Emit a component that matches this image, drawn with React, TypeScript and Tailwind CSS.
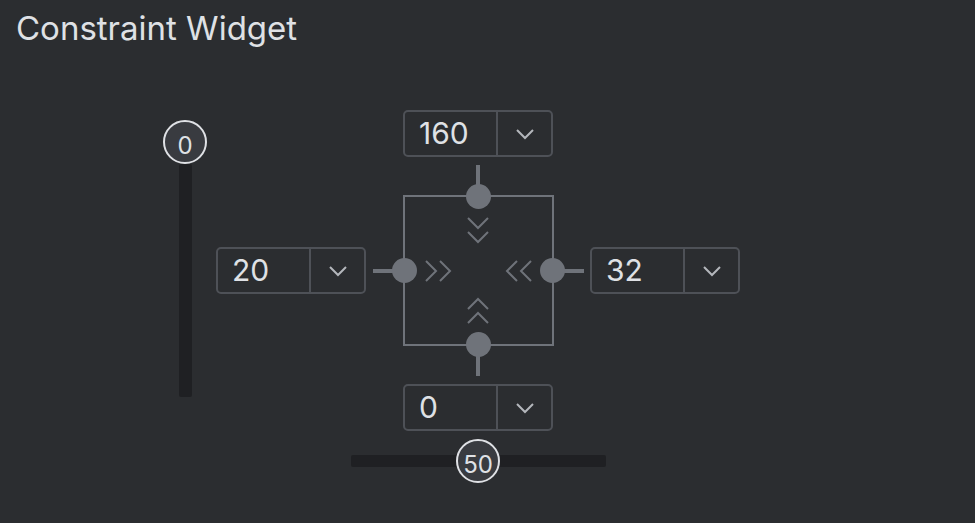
const font = "font-['Inter','Noto_Sans',sans-serif]";

const Chevron = () => (
  <svg width="20" height="12" viewBox="0 0 20 12" fill="none">
    <polyline points="2,2 10,10 18,2" stroke="#b4b7bc" strokeWidth="2" />
  </svg>
);

const Dropdown = ({ value }: { value: string }) => (
  <div className="flex h-[47px] w-[150px] rounded-[5px] border-2 border-[#4e5157]">
    <div className="flex flex-1 items-center pl-[14px] text-[30px] text-[#dfe1e5]">{value}</div>
    <div className="flex w-[55px] items-center justify-center border-l-2 border-[#4e5157]">
      <Chevron />
    </div>
  </div>
);

const Thumb = ({ value }: { value: string }) => (
  <div className="flex h-[44px] w-[44px] items-center justify-center rounded-full border-2 border-[#dfe1e5] bg-[#393b40] pt-[8px] text-[24px] leading-none text-[#dfe1e5]">
    {value}
  </div>
);

const Dot = ({ className }: { className: string }) => (
  <div className={"absolute h-[25px] w-[25px] rounded-full bg-[#6f737a] " + className} />
);

const stroke = { stroke: "#6f737a", strokeWidth: 2, fill: "none" };

export default function App() {
  return (
    <div className={`h-[523px] w-[975px] bg-[#2b2d30] ${font}`}>
      <div className="h-[110px] pl-[16px] pt-[10px] text-[33px] leading-[36px] text-[#dfe1e5]">Constraint Widget</div>
      <div className="flex pl-[163px]">
        {/* vertical slider */}
        <div className="mt-[10px] flex w-[44px] flex-col items-center">
          <Thumb value="0" />
          <div className="h-[233px] w-[13px] rounded-[2px] bg-[#1f2023]" />
        </div>

        {/* widget */}
        <div className="ml-[9px] flex w-[524px] flex-col items-center">
          <Dropdown value="160" />
          <div className="mt-[8px] h-[30px] w-[4px] bg-[#6f737a]" />
          <div className="flex w-full items-center justify-between">
            <Dropdown value="20" />
            <div className="flex items-center">
              <div className="h-[4px] w-[30px] bg-[#6f737a]" />
              <div className="relative h-[151px] w-[151px] border-2 border-[#6f737a]">
                <Dot className="left-[61px] top-[-13px]" />
                <Dot className="bottom-[-13px] left-[61px]" />
                <Dot className="left-[-13px] top-[61px]" />
                <Dot className="right-[-13px] top-[61px]" />
                <div className="flex h-full w-full flex-col items-center justify-between p-[20px]">
                  <svg width="22" height="27" viewBox="0 0 22 27">
                    <polyline points="1,1 11,11 21,1" {...stroke} />
                    <polyline points="1,15 11,25 21,15" {...stroke} />
                  </svg>
                  <div className="flex w-full justify-between">
                    <svg width="27" height="22" viewBox="0 0 27 22">
                      <polyline points="1,1 11,11 1,21" {...stroke} />
                      <polyline points="15,1 25,11 15,21" {...stroke} />
                    </svg>
                    <svg width="27" height="22" viewBox="0 0 27 22">
                      <polyline points="12,1 2,11 12,21" {...stroke} />
                      <polyline points="26,1 16,11 26,21" {...stroke} />
                    </svg>
                  </div>
                  <svg width="22" height="27" viewBox="0 0 22 27">
                    <polyline points="1,12 11,2 21,12" {...stroke} />
                    <polyline points="1,26 11,16 21,26" {...stroke} />
                  </svg>
                </div>
              </div>
              <div className="h-[4px] w-[30px] bg-[#6f737a]" />
            </div>
            <Dropdown value="32" />
          </div>
          <div className="h-[30px] w-[4px] bg-[#6f737a]" />
          <div className="mt-[8px]">
            <Dropdown value="0" />
          </div>
          {/* horizontal slider */}
          <div className="relative mt-[7px] flex h-[45px] w-[255px] items-center justify-center">
            <div className="h-[12px] w-full rounded-[2px] bg-[#1f2023]" />
            <div className="absolute">
              <Thumb value="50" />
            </div>
          </div>
        </div>
      </div>
    </div>
  );
}
